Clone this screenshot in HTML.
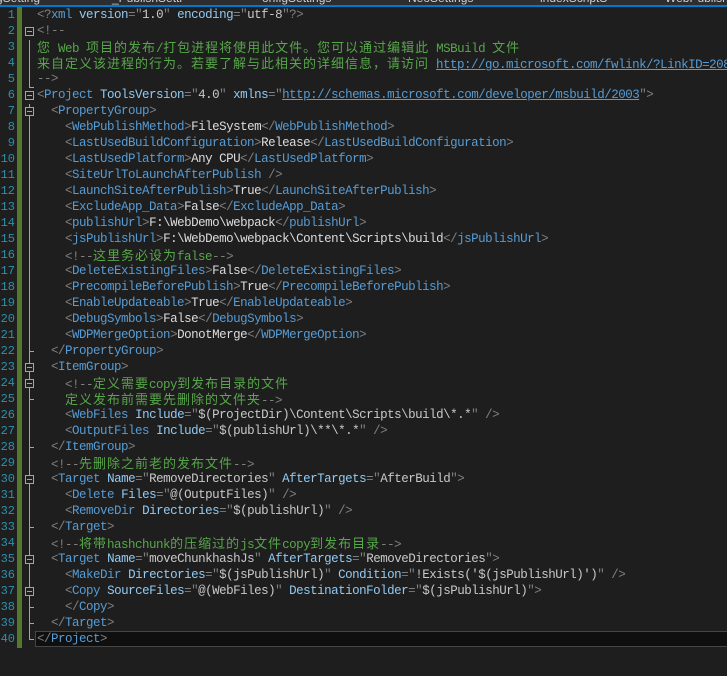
<!DOCTYPE html>
<html><head><meta charset="utf-8"><style>
body{margin:0;width:727px;height:676px;background:#1e1e1e;overflow:hidden;position:relative;font-family:"Liberation Mono","Noto Sans CJK SC",monospace;font-size:12.5px;letter-spacing:-0.5px}
#top{position:absolute;left:0;top:0;width:727px;height:5px;background:#2d2d30;overflow:hidden}
#top span{position:absolute;top:-9px;color:#d0d0d0;font-family:"Liberation Sans",sans-serif;font-size:12px;letter-spacing:0}
#bl{position:absolute;left:0;top:5px;width:727px;height:2px;background:#007acc}
#bar{position:absolute;left:17px;top:7px;width:5px;height:641px;background:#56782d}
.n{position:absolute;left:0;width:15px;text-align:right;color:#2b91af;height:16px;line-height:16px;letter-spacing:0;font-size:12px}
.l{position:absolute;left:37px;white-space:pre;height:16px;line-height:16px;color:#dcdcdc}
.b{color:#808080}.t{color:#569cd6}.a{color:#92caf4}.v{color:#c8c8c8}.c{color:#57a64a}.u{color:#569cd6;text-decoration:underline}
.k{font-family:"Noto Sans CJK SC",sans-serif;font-size:13px;letter-spacing:1px}
.f{position:absolute;left:25px;width:7px;height:7px;border:1px solid #a5a5a5;background:#1e1e1e}
.f:after{content:"";position:absolute;left:1px;top:3px;width:5px;height:1px;background:#a5a5a5}
.vl{position:absolute;left:29px;width:1px;background:#a5a5a5}
.tk{position:absolute;left:29px;width:5px;height:1px;background:#a5a5a5}
#cur{position:absolute;left:35px;top:631px;width:692px;height:14px;background:#0f0f0f;border:1px solid #464646}
</style></head><body>
<div id="top"><span style="left:-4px">gSetting</span><span style="left:112px">_PublishSetti</span><span style="left:262px">onfigSettings</span><span style="left:408px">NeoSettings</span><span style="left:540px">indexScriptS</span><span style="left:665px">WebPublish</span></div>
<div id="bl"></div>
<div id="bar"></div>
<div id="cur"></div>
<div class="vl" style="top:40px;height:48px"></div><div class="tk" style="top:87px"></div>
<div class="vl" style="top:104px;height:536px"></div><div class="tk" style="top:639px"></div>
<div class="tk" style="top:351px"></div>
<div class="tk" style="top:447px"></div>
<div class="tk" style="top:399px"></div>
<div class="tk" style="top:527px"></div>
<div class="tk" style="top:607px"></div>
<div class="tk" style="top:623px"></div>
<div class="f" style="top:27px"></div>
<div class="f" style="top:91px"></div>
<div class="f" style="top:107px"></div>
<div class="f" style="top:363px"></div>
<div class="f" style="top:379px"></div>
<div class="f" style="top:475px"></div>
<div class="f" style="top:555px"></div>
<div class="f" style="top:587px"></div>

<div class="n" style="top:7px">1</div><div class="l" style="top:7px"><span class="b">&lt;?</span><span class="t">xml</span> <span class="a">version</span><span class="b">="</span><span class="v">1.0</span><span class="b">"</span> <span class="a">encoding</span><span class="b">="</span><span class="v">utf-8</span><span class="b">"?&gt;</span></div>
<div class="n" style="top:23px">2</div><div class="l" style="top:23px"><span class="b">&lt;!--</span></div>
<div class="n" style="top:39px">3</div><div class="l c" style="top:39px"><span class="k">您</span> Web <span class="k">项目的发布</span>/<span class="k">打包进程将使用此文件。您可以通过编辑此</span> MSBuild <span class="k">文件</span></div>
<div class="n" style="top:55px">4</div><div class="l c" style="top:55px"><span class="k">来自定义该进程的行为。若要了解与此相关的详细信息，请访问</span> <span class="u">http://go.microsoft.com/fwlink/?LinkID=208121</span></div>
<div class="n" style="top:71px">5</div><div class="l" style="top:71px"><span class="b">--&gt;</span></div>
<div class="n" style="top:87px">6</div><div class="l" style="top:87px"><span class="b">&lt;</span><span class="t">Project</span> <span class="a">ToolsVersion</span><span class="b">="</span><span class="v">4.0</span><span class="b">"</span> <span class="a">xmlns</span><span class="b">="</span><span class="u">http://schemas.microsoft.com/developer/msbuild/2003</span><span class="b">"&gt;</span></div>
<div class="n" style="top:103px">7</div><div class="l" style="top:103px">  <span class="b">&lt;</span><span class="t">PropertyGroup</span><span class="b">&gt;</span></div>
<div class="n" style="top:119px">8</div><div class="l" style="top:119px">    <span class="b">&lt;</span><span class="t">WebPublishMethod</span><span class="b">&gt;</span>FileSystem<span class="b">&lt;/</span><span class="t">WebPublishMethod</span><span class="b">&gt;</span></div>
<div class="n" style="top:135px">9</div><div class="l" style="top:135px">    <span class="b">&lt;</span><span class="t">LastUsedBuildConfiguration</span><span class="b">&gt;</span>Release<span class="b">&lt;/</span><span class="t">LastUsedBuildConfiguration</span><span class="b">&gt;</span></div>
<div class="n" style="top:151px">10</div><div class="l" style="top:151px">    <span class="b">&lt;</span><span class="t">LastUsedPlatform</span><span class="b">&gt;</span>Any CPU<span class="b">&lt;/</span><span class="t">LastUsedPlatform</span><span class="b">&gt;</span></div>
<div class="n" style="top:167px">11</div><div class="l" style="top:167px">    <span class="b">&lt;</span><span class="t">SiteUrlToLaunchAfterPublish</span> <span class="b">/&gt;</span></div>
<div class="n" style="top:183px">12</div><div class="l" style="top:183px">    <span class="b">&lt;</span><span class="t">LaunchSiteAfterPublish</span><span class="b">&gt;</span>True<span class="b">&lt;/</span><span class="t">LaunchSiteAfterPublish</span><span class="b">&gt;</span></div>
<div class="n" style="top:199px">13</div><div class="l" style="top:199px">    <span class="b">&lt;</span><span class="t">ExcludeApp_Data</span><span class="b">&gt;</span>False<span class="b">&lt;/</span><span class="t">ExcludeApp_Data</span><span class="b">&gt;</span></div>
<div class="n" style="top:215px">14</div><div class="l" style="top:215px">    <span class="b">&lt;</span><span class="t">publishUrl</span><span class="b">&gt;</span>F:\WebDemo\webpack<span class="b">&lt;/</span><span class="t">publishUrl</span><span class="b">&gt;</span></div>
<div class="n" style="top:231px">15</div><div class="l" style="top:231px">    <span class="b">&lt;</span><span class="t">jsPublishUrl</span><span class="b">&gt;</span>F:\WebDemo\webpack\Content\Scripts\build<span class="b">&lt;/</span><span class="t">jsPublishUrl</span><span class="b">&gt;</span></div>
<div class="n" style="top:247px">16</div><div class="l" style="top:247px">    <span class="b">&lt;!--</span><span class="c"><span class="k">这里务必设为</span>false</span><span class="b">--&gt;</span></div>
<div class="n" style="top:263px">17</div><div class="l" style="top:263px">    <span class="b">&lt;</span><span class="t">DeleteExistingFiles</span><span class="b">&gt;</span>False<span class="b">&lt;/</span><span class="t">DeleteExistingFiles</span><span class="b">&gt;</span></div>
<div class="n" style="top:279px">18</div><div class="l" style="top:279px">    <span class="b">&lt;</span><span class="t">PrecompileBeforePublish</span><span class="b">&gt;</span>True<span class="b">&lt;/</span><span class="t">PrecompileBeforePublish</span><span class="b">&gt;</span></div>
<div class="n" style="top:295px">19</div><div class="l" style="top:295px">    <span class="b">&lt;</span><span class="t">EnableUpdateable</span><span class="b">&gt;</span>True<span class="b">&lt;/</span><span class="t">EnableUpdateable</span><span class="b">&gt;</span></div>
<div class="n" style="top:311px">20</div><div class="l" style="top:311px">    <span class="b">&lt;</span><span class="t">DebugSymbols</span><span class="b">&gt;</span>False<span class="b">&lt;/</span><span class="t">DebugSymbols</span><span class="b">&gt;</span></div>
<div class="n" style="top:327px">21</div><div class="l" style="top:327px">    <span class="b">&lt;</span><span class="t">WDPMergeOption</span><span class="b">&gt;</span>DonotMerge<span class="b">&lt;/</span><span class="t">WDPMergeOption</span><span class="b">&gt;</span></div>
<div class="n" style="top:343px">22</div><div class="l" style="top:343px">  <span class="b">&lt;/</span><span class="t">PropertyGroup</span><span class="b">&gt;</span></div>
<div class="n" style="top:359px">23</div><div class="l" style="top:359px">  <span class="b">&lt;</span><span class="t">ItemGroup</span><span class="b">&gt;</span></div>
<div class="n" style="top:375px">24</div><div class="l" style="top:375px">    <span class="b">&lt;!--</span><span class="c"><span class="k">定义需要</span>copy<span class="k">到发布目录的文件</span></span></div>
<div class="n" style="top:391px">25</div><div class="l" style="top:391px">    <span class="c"><span class="k">定义发布前需要先删除的文件夹</span></span><span class="b">--&gt;</span></div>
<div class="n" style="top:407px">26</div><div class="l" style="top:407px">    <span class="b">&lt;</span><span class="t">WebFiles</span> <span class="a">Include</span><span class="b">="</span><span class="v">$(ProjectDir)\Content\Scripts\build\*.*</span><span class="b">" /&gt;</span></div>
<div class="n" style="top:423px">27</div><div class="l" style="top:423px">    <span class="b">&lt;</span><span class="t">OutputFiles</span> <span class="a">Include</span><span class="b">="</span><span class="v">$(publishUrl)\**\*.*</span><span class="b">" /&gt;</span></div>
<div class="n" style="top:439px">28</div><div class="l" style="top:439px">  <span class="b">&lt;/</span><span class="t">ItemGroup</span><span class="b">&gt;</span></div>
<div class="n" style="top:455px">29</div><div class="l" style="top:455px">  <span class="b">&lt;!--</span><span class="c"><span class="k">先删除之前老的发布文件</span></span><span class="b">--&gt;</span></div>
<div class="n" style="top:471px">30</div><div class="l" style="top:471px">  <span class="b">&lt;</span><span class="t">Target</span> <span class="a">Name</span><span class="b">="</span><span class="v">RemoveDirectories</span><span class="b">"</span> <span class="a">AfterTargets</span><span class="b">="</span><span class="v">AfterBuild</span><span class="b">"&gt;</span></div>
<div class="n" style="top:487px">31</div><div class="l" style="top:487px">    <span class="b">&lt;</span><span class="t">Delete</span> <span class="a">Files</span><span class="b">="</span><span class="v">@(OutputFiles)</span><span class="b">" /&gt;</span></div>
<div class="n" style="top:503px">32</div><div class="l" style="top:503px">    <span class="b">&lt;</span><span class="t">RemoveDir</span> <span class="a">Directories</span><span class="b">="</span><span class="v">$(publishUrl)</span><span class="b">" /&gt;</span></div>
<div class="n" style="top:519px">33</div><div class="l" style="top:519px">  <span class="b">&lt;/</span><span class="t">Target</span><span class="b">&gt;</span></div>
<div class="n" style="top:535px">34</div><div class="l" style="top:535px">  <span class="b">&lt;!--</span><span class="c"><span class="k">将带</span>hashchunk<span class="k">的压缩过的</span>js<span class="k">文件</span>copy<span class="k">到发布目录</span></span><span class="b">--&gt;</span></div>
<div class="n" style="top:551px">35</div><div class="l" style="top:551px">  <span class="b">&lt;</span><span class="t">Target</span> <span class="a">Name</span><span class="b">="</span><span class="v">moveChunkhashJs</span><span class="b">"</span> <span class="a">AfterTargets</span><span class="b">="</span><span class="v">RemoveDirectories</span><span class="b">"&gt;</span></div>
<div class="n" style="top:567px">36</div><div class="l" style="top:567px">    <span class="b">&lt;</span><span class="t">MakeDir</span> <span class="a">Directories</span><span class="b">="</span><span class="v">$(jsPublishUrl)</span><span class="b">"</span> <span class="a">Condition</span><span class="b">="</span><span class="v">!Exists('$(jsPublishUrl)')</span><span class="b">" /&gt;</span></div>
<div class="n" style="top:583px">37</div><div class="l" style="top:583px">    <span class="b">&lt;</span><span class="t">Copy</span> <span class="a">SourceFiles</span><span class="b">="</span><span class="v">@(WebFiles)</span><span class="b">"</span> <span class="a">DestinationFolder</span><span class="b">="</span><span class="v">$(jsPublishUrl)</span><span class="b">"&gt;</span></div>
<div class="n" style="top:599px">38</div><div class="l" style="top:599px">    <span class="b">&lt;/</span><span class="t">Copy</span><span class="b">&gt;</span></div>
<div class="n" style="top:615px">39</div><div class="l" style="top:615px">  <span class="b">&lt;/</span><span class="t">Target</span><span class="b">&gt;</span></div>
<div class="n" style="top:631px">40</div><div class="l" style="top:631px"><span class="b">&lt;/</span><span class="t">Project</span><span class="b">&gt;</span></div>
</body></html>
